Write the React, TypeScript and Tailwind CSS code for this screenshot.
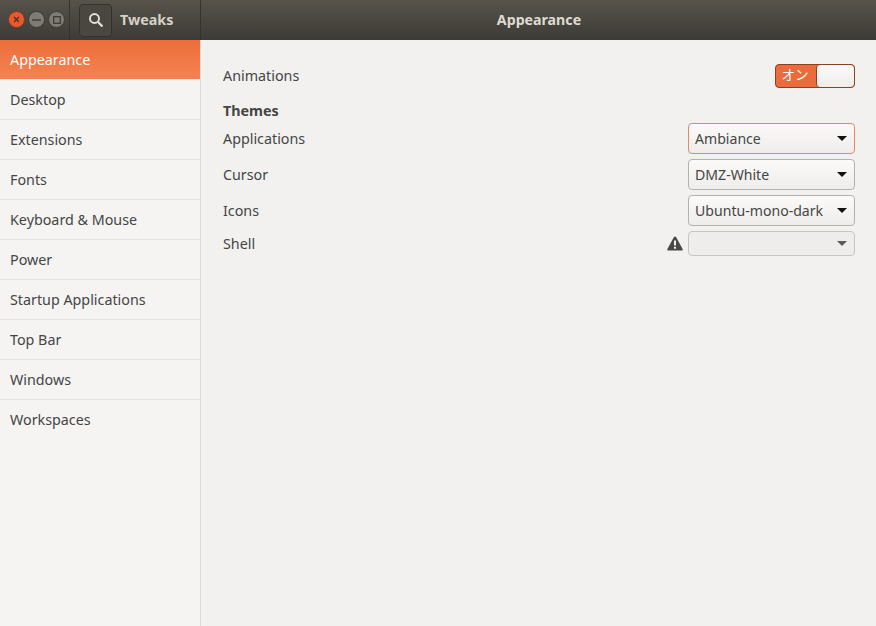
import React from 'react';

const font = { fontFamily: '"Noto Sans", "Noto Sans CJK JP", sans-serif' };

const pages = ['Appearance', 'Desktop', 'Extensions', 'Fonts', 'Keyboard & Mouse', 'Power', 'Startup Applications', 'Top Bar', 'Windows', 'Workspaces'];

const Arrow: React.FC<{ dim?: boolean }> = ({ dim }) => (
  <svg width="10" height="5" viewBox="0 0 10 5" className="shrink-0">
    <path d="M0 0h10L5 5z" fill={dim ? '#5a5a58' : '#101010'} />
  </svg>
);

const Combo: React.FC<{ label: string; focused?: boolean }> = ({ label, focused }) => (
  <div
    className={`flex h-[31px] w-[167px] items-center justify-between rounded-[4px] border bg-gradient-to-b from-[#fbfaf9] to-[#efedeb] pl-[6px] pr-[7px] text-[14.1px] text-[#454545] ${focused ? 'border-[#e08a68]' : 'border-[#b5b1ac]'}`}
  >
    <span>{label}</span>
    <Arrow />
  </div>
);

const Row: React.FC<{ label: string; children: React.ReactNode; className?: string }> = ({ label, children, className }) => (
  <div className={`flex items-center justify-between ${className ?? ''}`}>
    <span className="text-[14.3px] text-[#454545]">{label}</span>
    {children}
  </div>
);

const App: React.FC = () => {
  return (
    <div className="flex h-[626px] w-[876px] flex-col overflow-hidden bg-[#f2f1f0]" style={font}>
      {/* Header bar */}
      <div className="flex h-[40px] shrink-0 bg-gradient-to-b from-[#57534b] to-[#3d3b36]">
        <div className="flex w-[70px] items-center gap-[3px] border-r border-[#35332f] pl-[8px] pb-[1px]">
          <div className="flex h-[17px] w-[17px] items-center justify-center rounded-full border border-[#7a3a20] bg-[#e9592f]">
            <svg width="7" height="7" viewBox="0 0 7 7"><path d="M1 1l5 5M6 1L1 6" stroke="#54301f" strokeWidth="1.4" /></svg>
          </div>
          <div className="flex h-[17px] w-[17px] items-center justify-center rounded-full border border-[#3b3935] bg-[#7f7c74]">
            <svg width="9" height="2" viewBox="0 0 9 2"><path d="M0 1h9" stroke="#3d3b36" strokeWidth="1.4" /></svg>
          </div>
          <div className="flex h-[17px] w-[17px] items-center justify-center rounded-full border border-[#3b3935] bg-[#7f7c74]">
            <svg width="8" height="8" viewBox="0 0 8 8"><rect x="0.7" y="0.7" width="6.6" height="6.6" fill="none" stroke="#3d3b36" strokeWidth="1.3" /></svg>
          </div>
        </div>
        <div className="flex w-[131px] items-center border-r border-[#35332f] pl-[9px]">
          <div className="flex h-[33px] w-[33px] items-center justify-center rounded-[4px] border border-[#33312d] bg-[#4a4741]">
            <svg width="16" height="16" viewBox="0 0 16 16" fill="none">
              <circle cx="6.5" cy="6.5" r="4.5" stroke="#e6e2da" strokeWidth="1.9" />
              <path d="M10 10l4.5 4.5" stroke="#e6e2da" strokeWidth="2.2" />
            </svg>
          </div>
          <span className="ml-[8px] text-[14.3px] font-bold text-[#d6d2c9]">Tweaks</span>
        </div>
        <div className="flex flex-1 items-center justify-center pl-[1px] text-[14.2px] font-bold text-[#dfdbd2]">Appearance</div>
      </div>

      <div className="flex min-h-0 flex-1">
        {/* Sidebar */}
        <div className="w-[201px] shrink-0 border-r border-[#dcd9d6] bg-[#f5f4f3]">
          {pages.map((p, i) => (
            <div
              key={p}
              className={`flex h-[40px] items-center pl-[10px] text-[14.3px] ${i === 0 ? 'border-b border-[#ebe9e7] bg-gradient-to-b from-[#ec6f3b] to-[#f58152] text-white' : 'border-b border-[#e3e1de] text-[#454545]'} ${i === pages.length - 1 ? 'border-b-0' : ''}`}
            >
              {p}
            </div>
          ))}
        </div>

        {/* Content */}
        <div className="flex-1 pl-[22px] pr-[21px] pt-[24px]">
          <Row label="Animations">
            <div className="flex h-[24px] w-[80px] overflow-hidden rounded-[4px] border border-[#8a4022] bg-[#ea6c3c]">
              <span className="w-[40px] pr-[2px] text-center text-[13.5px] leading-[21px] text-white">オン</span>
              <div className="flex-1 rounded-[4px] border-l border-[#8a4022] bg-gradient-to-b from-[#fbfaf9] to-[#efedeb]" />
            </div>
          </Row>
          <div className="mt-[12px] h-[22px] text-[14.3px] font-bold leading-[22px] text-[#454545]">Themes</div>
          <Row label="Applications" className="mt-[1px]"><Combo label="Ambiance" focused /></Row>
          <Row label="Cursor" className="mt-[5px]"><Combo label="DMZ-White" /></Row>
          <Row label="Icons" className="mt-[5px]"><Combo label="Ubuntu-mono-dark" /></Row>
          <Row label="Shell" className="mt-[5px]">
            <div className="flex items-center gap-[5px]">
              <svg width="16" height="15" viewBox="0 0 16 15">
                <path fillRule="evenodd" d="M8 0.5c.5 0 .9.3 1.2.8l6.4 11.6c.4.8-.1 1.7-1 1.7H1.4c-.9 0-1.4-.9-1-1.7L6.8 1.3C7.1.8 7.5.5 8 .5zM7 4.5V9.5h2V4.5zM7 10.8v2h2v-2z" fill="#484848" />
              </svg>
              <div className="flex h-[25px] w-[167px] items-center justify-end rounded-[4px] border border-[#c9c6c2] bg-[#efedeb] pr-[7px]">
                <Arrow dim />
              </div>
            </div>
          </Row>
        </div>
      </div>
    </div>
  );
};

export default App;
